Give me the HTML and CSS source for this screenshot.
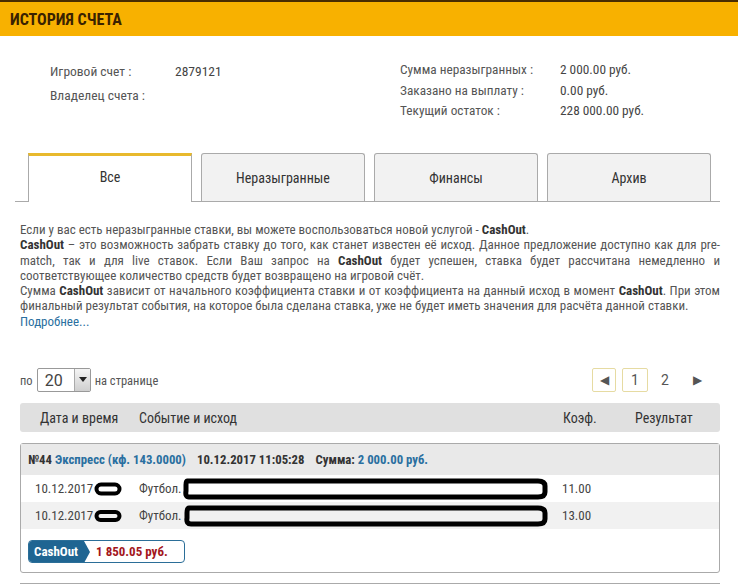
FILE: index.html
```html
<!DOCTYPE html>
<html lang="ru">
<head>
	<meta charset="UTF-8">
	<title>История счета</title>
	<link rel="stylesheet" href="styles.css">
</head>
<body>
	<div class="page-header">
		<h1>ИСТОРИЯ СЧЕТА</h1>
	</div>

	<div class="account-info">
		<div class="info-col left">
			<div class="info-row"><span class="info-label">Игровой счет :</span><span class="info-value">2879121</span></div>
			<div class="info-row"><span class="info-label">Владелец счета :</span><span class="info-value"></span></div>
		</div>
		<div class="info-col right">
			<div class="info-row"><span class="info-label">Сумма неразыгранных :</span><span class="info-value">2 000.00 руб.</span></div>
			<div class="info-row"><span class="info-label">Заказано на выплату :</span><span class="info-value">0.00 руб.</span></div>
			<div class="info-row"><span class="info-label">Текущий остаток :</span><span class="info-value">228 000.00 руб.</span></div>
		</div>
	</div>

	<div class="tabs">
		<div class="tab active">Все</div>
		<div class="tab">Неразыгранные</div>
		<div class="tab">Финансы</div>
		<div class="tab">Архив</div>
	</div>

	<div class="cashout-info">
		Если у вас есть неразыгранные ставки, вы можете воспользоваться новой услугой - <b>CashOut</b>.<br>
		<b>CashOut</b> – это возможность забрать ставку до того, как станет известен её исход. Данное предложение доступно как для pre-match, так и для live ставок. Если Ваш запрос на <b>CashOut</b> будет успешен, ставка будет рассчитана немедленно и соответствующее количество средств будет возвращено на игровой счёт.<br>
		Сумма <b>CashOut</b> зависит от начального коэффициента ставки и от коэффициента на данный исход в момент <b>CashOut</b>. При этом финальный результат события, на которое была сделана ставка, уже не будет иметь значения для расчёта данной ставки.<br>
		<a href="#" class="more-link">Подробнее...</a>
	</div>

	<div class="list-controls">
		<div class="per-page">
			по
			<div class="select-box"><span class="select-value">20</span><span class="select-arrow"></span></div>
			на странице
		</div>
		<div class="pager">
			<span class="pager-btn">&#9664;</span>
			<span class="pager-btn current">1</span>
			<span class="pager-num">2</span>
			<span class="pager-next">&#9654;</span>
		</div>
	</div>

	<div class="table-head">
		<span class="col-date">Дата и время</span>
		<span class="col-event">Событие и исход</span>
		<span class="col-coef">Коэф.</span>
		<span class="col-result">Результат</span>
	</div>

	<div class="bet-card">
		<div class="bet-title">
			<span>№44 <span class="bet-type">Экспресс (кф. 143.0000)</span></span>
			<span>10.12.2017 11:05:28</span>
			<span>Сумма: <span class="bet-type">2 000.00 руб.</span></span>
		</div>
		<div class="bet-row">
			<span class="col-date">10.12.2017<svg class="mark-small" width="28" height="14" viewBox="0 0 28 14"><rect x="2.5" y="2.5" width="23" height="9" rx="4.5" fill="none" stroke="#000" stroke-width="4"/></svg></span>
			<span class="col-event">Футбол.<svg class="mark-big" width="366" height="24" viewBox="0 0 366 24"><path d="M4 4 H355 Q362 4 362 9 V15 Q362 20 355 20 H6 Q2 20 3 14 V8 Q3 4 4 4 Z" fill="none" stroke="#000" stroke-width="5"/></svg></span>
			<span class="col-coef">11.00</span>
		</div>
		<div class="bet-row odd">
			<span class="col-date">10.12.2017<svg class="mark-small" width="28" height="14" viewBox="0 0 28 14"><rect x="2.5" y="3" width="23" height="8" rx="4" fill="none" stroke="#000" stroke-width="4"/></svg></span>
			<span class="col-event">Футбол.<svg class="mark-big" width="366" height="24" viewBox="0 0 366 24"><path d="M6 4 H355 Q362 4 362 9 V15 Q362 20 355 20 H8 Q3 20 4 14 V9 Q4 4 6 4 Z" fill="none" stroke="#000" stroke-width="5"/></svg></span>
			<span class="col-coef">13.00</span>
		</div>
		<div class="bet-footer">
			<div class="cashout-badge">
				<span class="cashout-label">CashOut</span>
				<span class="cashout-sum">1 850.05 руб.</span>
			</div>
		</div>
	</div>
	<div class="next-card"></div>
</body>
</html>
```

FILE: styles.css
```css
body {
	margin: 0;
	font-family: "Roboto Condensed", "Liberation Sans Narrow", "DejaVu Sans Condensed", Roboto, sans-serif;
	font-size: 13.5px;
	color: #555;
	background-color: #ffffff;
}
.page-header {
	background-color: #f8b100;
	border-top: 2px solid #4a2c00;
	height: 34px;
	display: flex;
	align-items: center;
	padding-left: 10px;
}
.page-header h1 {
	margin: 0;
	font-size: 16px;
	font-weight: bold;
	color: #3a2200;
}
.account-info {
	display: flex;
	padding: 23px 0 0 50px;
	height: 94px;
}
.info-col.left {
	width: 350px;
}
.info-col.left .info-row {
	height: 24px;
	line-height: 24px;
}
.info-col.right .info-row {
	height: 20.5px;
	line-height: 20.5px;
}
.info-col.right {
	margin-top: 1px;
	font-size: 13.3px;
}
.info-label {
	display: inline-block;
	width: 125px;
}
.info-col.right .info-label {
	width: 160px;
}
.info-value {
	color: #444;
}
.tabs {
	display: flex;
	gap: 9px;
	margin: 0 18px 0 15px;
	padding-left: 13px;
	border-bottom: 1px solid #aaa;
	height: 48px;
}
.tab {
	width: 164px;
	box-sizing: border-box;
	display: flex;
	align-items: center;
	justify-content: center;
	background-color: #f2f2f2;
	border: 1px solid #aaa;
	border-bottom: none;
	border-radius: 3px 3px 0 0;
	color: #333;
	font-size: 14px;
}
.tab.active {
	background-color: #fff;
	border-top: 3px solid #e8b92d;
	border-radius: 0;
	margin-bottom: -1px;
	padding-bottom: 4px;
}
.cashout-info {
	margin: 20px 18px 0 20px;
	font-size: 13px;
	line-height: 15.3px;
	text-align: justify;
	color: #555;
}
.cashout-info b {
	color: #333;
}
.more-link {
	color: #2a6fa0;
	text-decoration: none;
}
.list-controls {
	display: flex;
	justify-content: space-between;
	align-items: center;
	margin: 39px 31px 0 20px;
}
.per-page {
	display: flex;
	align-items: center;
	gap: 4px;
	font-size: 12.5px;
	color: #555;
}
.select-box {
	display: flex;
	align-items: center;
	justify-content: space-between;
	width: 54px;
	height: 24px;
	box-sizing: border-box;
	border: 1px solid #999;
	border-radius: 2px;
	padding-left: 7px;
}
.select-value {
	font-size: 16px;
	font-family: Roboto, sans-serif;
	color: #444;
}
.select-arrow {
	width: 15px;
	height: 22px;
	background: linear-gradient(#f4f4f4, #cfcfcf);
	border-left: 1px solid #aaa;
	position: relative;
}
.select-arrow::after {
	content: "";
	position: absolute;
	left: 4px;
	top: 8px;
	border-left: 4px solid transparent;
	border-right: 4px solid transparent;
	border-top: 5px solid #222;
}
.pager {
	display: flex;
	align-items: center;
	font-family: Roboto, sans-serif;
}
.pager-btn {
	display: flex;
	align-items: center;
	justify-content: center;
	width: 24px;
	height: 24px;
	box-sizing: border-box;
	border: 1px solid #e6dba2;
	border-radius: 2px;
	font-size: 14px;
	color: #555;
}
.pager-btn:first-child {
	font-size: 12px;
}
.pager-btn.current {
	width: 26px;
	margin-left: 6px;
}
.pager-num {
	width: 24px;
	margin-left: 5px;
	text-align: center;
	font-size: 14px;
	color: #555;
}
.pager-next {
	width: 20px;
	margin-left: 10px;
	text-align: center;
	font-size: 12px;
	color: #555;
}
.table-head {
	display: flex;
	align-items: center;
	margin: 11px 18px 0 20px;
	height: 29px;
	background-color: #e0e0e0;
	border-radius: 3px;
	font-size: 14px;
	color: #333;
}
.col-date {
	width: 99px;
	padding-left: 20px;
	display: flex;
	align-items: center;
}
.col-event {
	flex: 1;
	display: flex;
	align-items: center;
}
.col-coef {
	width: 72px;
}
.col-result {
	width: 85px;
}
.bet-card {
	margin: 11px 18px 0 20px;
	border: 1px solid #aaa;
	border-radius: 3px;
	height: 128px;
}
.bet-title {
	display: flex;
	gap: 11px;
	align-items: center;
	height: 31px;
	padding-left: 7px;
	background-color: #e9e9e9;
	font-weight: bold;
	font-size: 12.75px;
	color: #333;
}
.bet-type {
	color: #2a6fa0;
}
.bet-row {
	display: flex;
	align-items: center;
	height: 27px;
	font-size: 13px;
	color: #444;
}
.bet-row .col-date {
	padding-left: 14px;
	width: 104px;
}
.bet-row.odd {
	background-color: #f1f1f1;
}
.bet-row .col-coef {
	width: 157px;
}
.mark-small {
	margin-left: 1px;
}
.mark-big {
	margin-left: 1px;
}
.bet-footer {
	padding: 11px 0 0 7px;
}
.cashout-badge {
	display: inline-flex;
	align-items: center;
	height: 23px;
	width: 157px;
	box-sizing: border-box;
	border: 1px solid #2b6e98;
	border-radius: 4px;
	overflow: hidden;
	font-weight: bold;
	font-size: 13px;
}
.cashout-label {
	position: relative;
	height: 100%;
	display: flex;
	align-items: center;
	padding: 0 6px 0 5px;
	background-color: #1f6592;
	color: #fff;
}
.cashout-label::after {
	content: "";
	position: absolute;
	right: -6px;
	top: 0;
	border-top: 11px solid transparent;
	border-bottom: 11px solid transparent;
	border-left: 6px solid #1f6592;
}
.cashout-sum {
	padding-left: 12px;
	color: #a3161c;
}
.next-card {
	margin: 10px 18px 0 20px;
	border-top: 1px solid #aaa;
}
```
